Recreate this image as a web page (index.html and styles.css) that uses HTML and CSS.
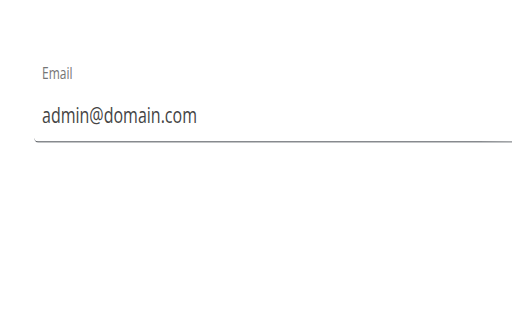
FILE: index.html
```html
<!DOCTYPE html>
<html>
<head>
<meta charset="utf-8">
<link rel="stylesheet" href="styles.css">
</head>
<body>
<div class="page">
  <div class="field">
    <label class="label">Email</label>
    <div class="value">admin@domain.com</div>
  </div>
</div>
</body>
</html>
```
FILE: styles.css
```css
html, body {
  margin: 0;
  padding: 0;
  background: #ffffff;
  overflow: hidden;
}
.page {
  width: 512px;
  height: 240px;
  padding: 40px 0 0 34px;
  box-sizing: border-box;
  font-family: "Open Sans", sans-serif;
  transform: scaleY(1.3333);
  transform-origin: 0 0;
}
.field {
  border-bottom: 1.5px solid #5f6368;
  border-bottom-left-radius: 4px;
  padding: 6.5px 0 9.75px 8px;
  display: flex;
  flex-direction: column;
  gap: 13.75px;
}
.label {
  font-size: 12px;
  line-height: 16px;
  color: #757575;
}
.value {
  font-size: 16px;
  line-height: 20px;
  color: #444444;
}
```
